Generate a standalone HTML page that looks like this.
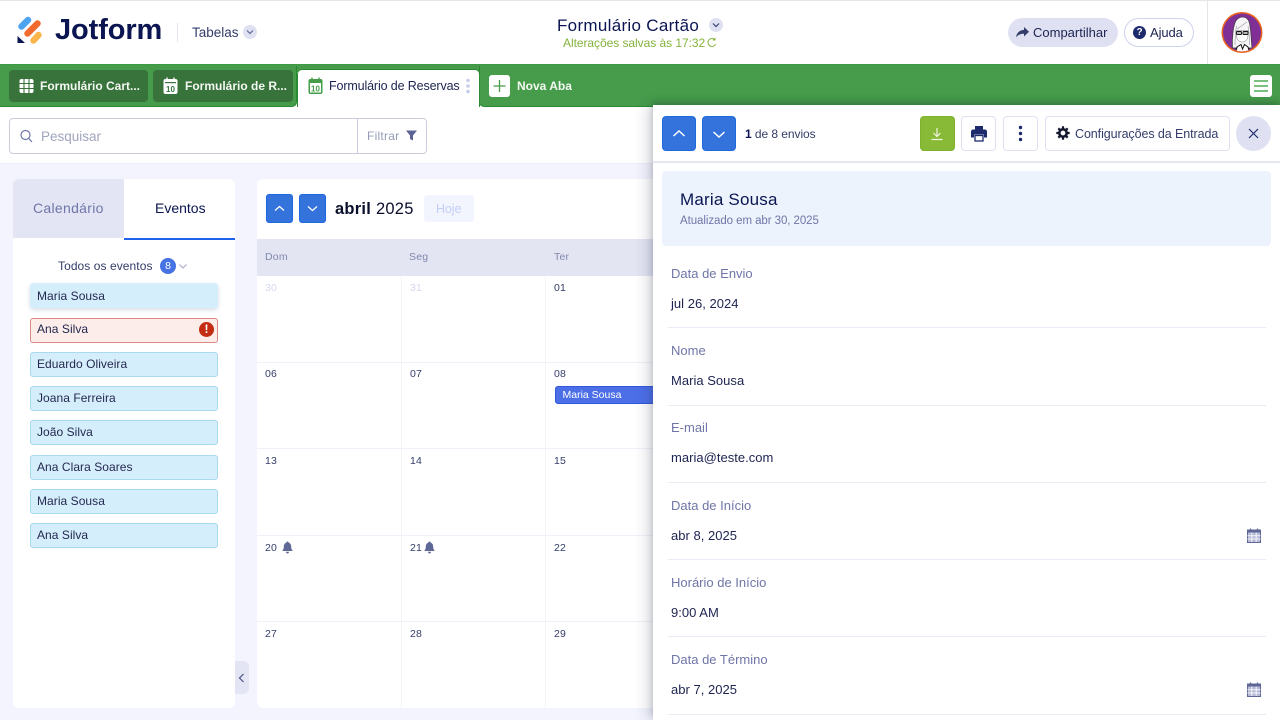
<!DOCTYPE html>
<html lang="pt"><head><meta charset="utf-8"><title>Jotform Tabelas</title>
<style>
*{box-sizing:border-box;margin:0;padding:0}
html,body{width:1280px;height:720px;overflow:hidden;background:#f3f4fd;font-family:"Liberation Sans",sans-serif;color:#0a1551}
.a{position:absolute}
.t{position:absolute;white-space:nowrap;line-height:16px}
svg{display:block}
.ev{position:absolute;left:30px;width:188px;height:25px;border:1px solid #a8d9ef;background:#d5eefb;border-radius:3px;font-size:12px;line-height:23px;padding-left:6px;color:#23284f;letter-spacing:.05px}
.day{position:absolute;font-size:10.5px;line-height:12px;color:#343c6a;letter-spacing:.1px}
.lab{position:absolute;left:671px;font-size:13px;line-height:16px;color:#6f76a7;white-space:nowrap;letter-spacing:0}
.val{position:absolute;left:671px;font-size:13px;line-height:16px;color:#1d2350;white-space:nowrap;letter-spacing:.02px}
.sep{position:absolute;left:668px;width:598px;height:1px;background:#eaebf5}
.btn{position:absolute;top:116px;height:35px;border-radius:4px}
.blue{background:#3473db;border:1px solid #1f69de}
.wh{background:#fff;border:1.5px solid #dfe1f2}
.tabt{font-size:12px;font-weight:700;color:#f4f8f2}
</style></head><body>

<!-- search row -->
<div class="a" style="left:0;top:100px;width:1280px;height:64px;background:#fff;border-bottom:1px solid #eceef8"></div>

<!-- header -->
<div class="a" style="left:0;top:0;width:1280px;height:65px;background:#fff;border-top:1px solid #e6e6e6"></div>
<svg class="a" style="left:16px;top:15px" width="28" height="30" viewBox="0 0 28 30">
<path d="M5.500 11.500L12 5" stroke="#4da3f0" stroke-width="6.500" stroke-linecap="round"/>
<path d="M11.500 18.500L21.500 8.500" stroke="#f26b2e" stroke-width="6.500" stroke-linecap="round"/>
<path d="M17.500 25.500L22.500 20" stroke="#f9b64a" stroke-width="6.500" stroke-linecap="round"/>
<path d="M1.500 21V28H9Z" fill="#0a1551"/></svg>
<div class="t" style="left:55px;top:13px;font-size:29px;line-height:34px;font-weight:700;color:#0a1551;letter-spacing:-.1px">Jotform</div>
<div class="a" style="left:177px;top:23px;width:1px;height:19px;background:#e3e5f3"></div>
<div class="t" style="left:192px;top:25px;font-size:13.5px;color:#343c6a;letter-spacing:0">Tabelas</div>
<div class="a" style="left:243px;top:25px;width:14px;height:14px;border-radius:50%;background:#dfe1f2"></div>
<svg class="a" style="left:246px;top:29px" width="8" height="6" viewBox="0 0 8 6"><path d="M1 1.500L4 4.500L7 1.500" fill="none" stroke="#5a6190" stroke-width="1.100"/></svg>

<div class="t" style="left:557px;top:16px;font-size:17px;line-height:20px;color:#0a1551;letter-spacing:.3px">Formulário Cartão</div>
<div class="a" style="left:709px;top:18px;width:14px;height:14px;border-radius:50%;background:#dfe1f2"></div>
<svg class="a" style="left:712px;top:22px" width="8" height="6" viewBox="0 0 8 6"><path d="M1 1.500L4 4.500L7 1.500" fill="none" stroke="#3a4170" stroke-width="1.200"/></svg>
<div class="t" style="left:563px;top:35px;font-size:12px;color:#84b33c;letter-spacing:-.05px">Alterações salvas às 17:32</div>
<svg class="a" style="left:707px;top:37px" width="10" height="11" viewBox="0 0 10 11"><path d="M8.600 7.200A4 4 0 1 1 7.800 2.600M8 .8V3H5.800" fill="none" stroke="#84b33c" stroke-width="1"/></svg>

<div class="a" style="left:1008px;top:18px;width:110px;height:29px;border-radius:15px;background:#dfe1f2"></div>
<svg class="a" style="left:1015px;top:26px" width="15" height="13" viewBox="0 0 15 13"><path d="M9 1L14 5.800L9 10.500V7.700C5.500 7.700 3 8.600 1 11.500C1.400 7.600 4 4.300 9 3.900Z" fill="#343c6a"/></svg>
<div class="t" style="left:1033px;top:25px;font-size:13px;color:#1d2350;letter-spacing:0">Compartilhar</div>
<div class="a" style="left:1124px;top:18px;width:70px;height:29px;border-radius:15px;background:#fff;border:1px solid #ced2ef"></div>
<div class="a" style="left:1133px;top:26px;width:13px;height:13px;border-radius:50%;background:#1d2a6b;color:#fff;font-size:10px;font-weight:700;line-height:13px;text-align:center">?</div>
<div class="t" style="left:1150px;top:25px;font-size:13px;color:#1d2350;letter-spacing:-.1px">Ajuda</div>
<div class="a" style="left:1207px;top:1px;width:1px;height:64px;background:#e6e6e6"></div>
<svg class="a" style="left:1221px;top:11px" width="42" height="43" viewBox="0 0 42 43">
<defs><clipPath id="c"><circle cx="21" cy="21.500" r="19"/></clipPath></defs>
<circle cx="21" cy="21.500" r="20.500" fill="#e8641f"/><circle cx="21" cy="21.500" r="19" fill="#7f2f96"/>
<g clip-path="url(#c)">
<path d="M11.500 37C11 28 12 13 15.500 9C19 5 25 5 27.500 9.500C30 14 30 28 31 37Z" fill="#f7f4f7" stroke="#3a3a3a" stroke-width=".7"/>
<path d="M16 18C19 16 23 13 26 11M14 34C14 26 14.500 20 15.500 15M28.500 34C28.500 26 28 20 27 15" fill="none" stroke="#999" stroke-width=".6"/>
<path d="M15.500 19.500H27V25C26.500 29 24 31 21.300 31C18.500 31 16 29 15.500 25Z" fill="#fff" stroke="#777" stroke-width=".5"/>
<rect x="15.500" y="20.500" width="5" height="3" rx=".8" fill="#bbb" stroke="#111" stroke-width=".9"/><rect x="22" y="20.500" width="5" height="3" rx=".8" fill="#bbb" stroke="#111" stroke-width=".9"/>
<path d="M14 41.500L17 36L20 34L21.500 38L23.500 34L27 36L29 41.500Z" fill="#fff"/>
<path d="M16 36L20 33.500L21.500 38L23.500 33.500L27 36L29 43H14Z" fill="none" stroke="#111" stroke-width="1"/>
</g></svg>

<!-- tab bar -->
<div class="a" style="left:0;top:64px;width:1280px;height:8px;background:#469c4b;border-top:1px solid #3c9a42"></div>
<div class="a" style="left:0;top:66px;width:297px;height:41px;background:#469c4b;border-bottom:1px solid #2a8a30;border-right:1px solid #2a8a30;border-radius:0 0 5px 0"></div>
<div class="a" style="left:479px;top:66px;width:801px;height:41px;background:#469c4b;border-bottom:1px solid #2a8a30;border-left:1px solid #2a8a30;border-radius:0 0 0 5px"></div>
<div class="a" style="left:9px;top:70px;width:139px;height:32px;background:#38733b;border-radius:4px"></div>
<svg class="a" style="left:19px;top:78px" width="15" height="16" viewBox="0 0 15 16"><rect x=".5" y="1" width="14" height="14" rx="2" fill="#fff"/><path d="M5 1V15M10 1V15M.5 5.500H14.500M.5 10.500H14.500" stroke="#38733b" stroke-width="1.100"/></svg>
<div class="t tabt" style="left:40px;top:78px">Formulário Cart...</div>
<div class="a" style="left:153px;top:70px;width:140px;height:32px;background:#38733b;border-radius:4px"></div>
<svg class="a" style="left:163px;top:77px" width="15" height="18" viewBox="0 0 15 18"><rect x=".5" y="2" width="14" height="15" rx="2" fill="#fff"/><rect x="2" y="5" width="11" height="1.200" fill="#38733b"/><path d="M4 .5V3.500M11 .5V3.500" stroke="#fff" stroke-width="1.400"/><text x="7.500" y="14.800" font-size="8" font-weight="700" text-anchor="middle" fill="#38733b" font-family="Liberation Sans">10</text></svg>
<div class="t tabt" style="left:185px;top:78px">Formulário de R...</div>
<div class="a" style="left:297px;top:69px;width:183px;height:38px;background:#fff;border:1px solid #2a8a30;border-bottom:0;border-radius:5px 5px 0 0"></div>
<svg class="a" style="left:308px;top:77px" width="15" height="18" viewBox="0 0 15 18"><rect x=".5" y="2" width="14" height="15" rx="2" fill="#459c49"/><rect x="2" y="6" width="11" height="9.500" fill="#fff"/><path d="M4 .5V3.500M11 .5V3.500" stroke="#459c49" stroke-width="1.400"/><text x="7.500" y="14.500" font-size="8" font-weight="700" text-anchor="middle" fill="#459c49" font-family="Liberation Sans">10</text></svg>
<div class="t" style="left:329px;top:78px;font-size:12.500px;color:#1d2350;letter-spacing:-.13px">Formulário de Reservas</div>
<svg class="a" style="left:465px;top:78px" width="6" height="16" viewBox="0 0 6 16"><circle cx="3" cy="2.500" r="1.800" fill="#c8cde8"/><circle cx="3" cy="8" r="1.800" fill="#c8cde8"/><circle cx="3" cy="13.500" r="1.800" fill="#c8cde8"/></svg>
<div class="a" style="left:489px;top:75px;width:21px;height:22px;background:#fff;border-radius:3px"></div>
<svg class="a" style="left:493px;top:79px" width="13" height="14" viewBox="0 0 13 14"><path d="M6.500 1V13M.5 7H12.500" stroke="#459c49" stroke-width="1.300"/></svg>
<div class="t tabt" style="left:517px;top:78px">Nova Aba</div>
<div class="a" style="left:1250px;top:75px;width:22px;height:22px;background:#fff;border-radius:3px"></div>
<svg class="a" style="left:1253px;top:79px" width="16" height="14" viewBox="0 0 16 14"><path d="M1 2H15M1 7H15M1 12H15" stroke="#2a9a30" stroke-width="1.300"/></svg>

<!-- search controls -->
<div class="a" style="left:9px;top:118px;width:418px;height:36px;background:#fff;border:1px solid #c9ccdf;border-radius:4px"></div>
<div class="a" style="left:357px;top:118px;width:1px;height:36px;background:#c9ccdf"></div>
<svg class="a" style="left:20px;top:129px" width="13" height="14" viewBox="0 0 13 14"><circle cx="5.500" cy="6" r="4.500" fill="none" stroke="#6f76a7" stroke-width="1.200"/><path d="M8.800 9.500L12 13" stroke="#6f76a7" stroke-width="1.200"/></svg>
<div class="t" style="left:41px;top:128px;font-size:13.500px;line-height:17px;color:#a0a4bc;letter-spacing:0">Pesquisar</div>
<div class="t" style="left:367px;top:128px;font-size:12px;color:#979cb8;letter-spacing:.25px">Filtrar</div>
<svg class="a" style="left:406px;top:130px" width="11" height="11" viewBox="0 0 11 11"><path d="M0 .5H11L7 5.500V10.500L4 9V5.500Z" fill="#5c6496"/></svg>

<!-- sidebar -->
<div class="a" style="left:13px;top:179px;width:222px;height:529px;background:#fff;border-radius:6px;overflow:hidden">
<div class="a" style="left:0;top:0;width:111px;height:59px;background:#e3e5f5"></div>
<div class="a" style="left:111px;top:59px;width:111px;height:1.500px;background:#1f62ee"></div>
</div>
<div class="t" style="left:33px;top:200px;font-size:14px;color:#6f76a7;letter-spacing:.3px">Calendário</div>
<div class="t" style="left:155px;top:200px;font-size:14px;color:#0a1551;letter-spacing:0">Eventos</div>
<div class="t" style="left:58px;top:258px;font-size:12px;color:#343c6a;letter-spacing:.07px">Todos os eventos</div>
<div class="a" style="left:160px;top:258px;width:16px;height:16px;border-radius:50%;background:#4573e3;color:#fff;font-size:10.500px;line-height:16px;text-align:center">8</div>
<svg class="a" style="left:179px;top:264px" width="8" height="5" viewBox="0 0 8 5"><path d="M.5 .5L4 4L7.500 .5" fill="none" stroke="#a5a9c6" stroke-width="1"/></svg>
<div class="ev" style="top:283px;border-color:#d5eefb;line-height:24px;box-shadow:0 2px 5px rgba(80,100,140,.22)">Maria Sousa</div>
<div class="ev" style="top:318px;background:#fcecea;border-color:#d98a82;line-height:21px">Ana Silva</div>
<div class="a" style="left:199px;top:322px;width:15px;height:15px;border-radius:50%;background:#c42b13;color:#fff;font-size:12px;font-weight:700;line-height:15px;text-align:center">!</div>
<div class="ev" style="top:352px">Eduardo Oliveira</div>
<div class="ev" style="top:386px">Joana Ferreira</div>
<div class="ev" style="top:420px">João Silva</div>
<div class="ev" style="top:455px">Ana Clara Soares</div>
<div class="ev" style="top:489px">Maria Sousa</div>
<div class="ev" style="top:523px">Ana Silva</div>
<div class="a" style="left:235px;top:661px;width:14px;height:33px;background:#e3e5f5;border-radius:0 6px 6px 0"></div>
<svg class="a" style="left:238px;top:673px" width="7" height="10" viewBox="0 0 7 10"><path d="M5.500 1L1.500 5L5.500 9" fill="none" stroke="#4a5282" stroke-width="1.200"/></svg>

<!-- calendar -->
<div class="a" style="left:257px;top:179px;width:420px;height:529px;background:#fff;border-radius:6px 0 0 6px"></div>
<div class="a blue" style="left:266px;top:194px;width:27px;height:29px;border-radius:3px"></div>
<svg class="a" style="left:274px;top:205px" width="11" height="7" viewBox="0 0 11 7"><path d="M1 5.500L5.500 1.500L10 5.500" fill="none" stroke="#fff" stroke-width="1.300"/></svg>
<div class="a blue" style="left:299px;top:194px;width:27px;height:29px;border-radius:3px"></div>
<svg class="a" style="left:307px;top:205px" width="11" height="7" viewBox="0 0 11 7"><path d="M1 1.500L5.500 5.500L10 1.500" fill="none" stroke="#fff" stroke-width="1.300"/></svg>
<div class="t" style="left:335px;top:199px;font-size:16.500px;line-height:20px;color:#0a0f2c;letter-spacing:.25px"><b style="font-weight:700">abril</b> 2025</div>
<div class="a" style="left:424px;top:195px;width:50px;height:27px;background:#f3f5fe;border-radius:3px"></div>
<div class="t" style="left:436px;top:201px;font-size:12.500px;color:#c3cdf5;letter-spacing:-.1px">Hoje</div>
<div class="a" style="left:257px;top:239px;width:400px;height:37px;background:#e3e5f3"></div>
<div class="t" style="left:265px;top:249px;font-size:10.500px;color:#8288ae;letter-spacing:.2px">Dom</div>
<div class="t" style="left:409px;top:249px;font-size:10.500px;color:#8288ae;letter-spacing:.2px">Seg</div>
<div class="t" style="left:554px;top:249px;font-size:10.500px;color:#8288ae;letter-spacing:.2px">Ter</div>
<div class="a" style="left:401px;top:276px;width:1px;height:432px;background:#f3f4fa"></div>
<div class="a" style="left:545px;top:276px;width:1px;height:432px;background:#f3f4fa"></div>
<div class="a" style="left:257px;top:362px;width:400px;height:1px;background:#f0f1f8"></div>
<div class="a" style="left:257px;top:448px;width:400px;height:1px;background:#f0f1f8"></div>
<div class="a" style="left:257px;top:535px;width:400px;height:1px;background:#f0f1f8"></div>
<div class="a" style="left:257px;top:621px;width:400px;height:1px;background:#f0f1f8"></div>
<div class="day" style="left:265px;top:282px;color:#d5d8f0">30</div>
<div class="day" style="left:410px;top:282px;color:#d5d8f0">31</div>
<div class="day" style="left:554px;top:282px">01</div>
<div class="day" style="left:265px;top:368px">06</div>
<div class="day" style="left:410px;top:368px">07</div>
<div class="day" style="left:554px;top:368px">08</div>
<div class="day" style="left:265px;top:455px">13</div>
<div class="day" style="left:410px;top:455px">14</div>
<div class="day" style="left:554px;top:455px">15</div>
<div class="day" style="left:265px;top:542px">20</div>
<div class="day" style="left:410px;top:542px">21</div>
<div class="day" style="left:554px;top:542px">22</div>
<div class="day" style="left:265px;top:628px">27</div>
<div class="day" style="left:410px;top:628px">28</div>
<div class="day" style="left:554px;top:628px">29</div>
<svg class="a" style="left:282px;top:541px" width="11" height="13" viewBox="0 0 11 13"><path d="M5.500 .5C6.300 .5 6.600 1 6.600 1.600C8.500 2.200 9.200 3.800 9.200 5.800C9.200 8 10 9 10.800 10H.2C1 9 1.800 8 1.800 5.800C1.800 3.800 2.500 2.200 4.400 1.600C4.400 1 4.700 .5 5.500 .5ZM4 10.800H7C7 12 6.300 12.500 5.500 12.500C4.700 12.500 4 12 4 10.800Z" fill="#5f6796"/></svg>
<svg class="a" style="left:424px;top:541px" width="11" height="13" viewBox="0 0 11 13"><path d="M5.500 .5C6.300 .5 6.600 1 6.600 1.600C8.500 2.200 9.200 3.800 9.200 5.800C9.200 8 10 9 10.800 10H.2C1 9 1.800 8 1.800 5.800C1.800 3.800 2.500 2.200 4.400 1.600C4.400 1 4.700 .5 5.500 .5ZM4 10.800H7C7 12 6.300 12.500 5.500 12.500C4.700 12.500 4 12 4 10.800Z" fill="#5f6796"/></svg>
<div class="a" style="left:554.500px;top:386px;width:110px;height:18px;background:#4c6fe8;border:1px solid #3059d9;border-radius:3px 0 0 3px;color:#fff;font-size:10.500px;line-height:16px;padding-left:7px;letter-spacing:0">Maria Sousa</div>

<!-- panel -->
<div class="a" style="left:653px;top:105px;width:627px;height:615px;background:#fff;box-shadow:-7px 0 12px rgba(40,50,90,.15),0 -3px 6px rgba(20,40,30,.25)"></div>
<div class="a" style="left:653px;top:161px;width:627px;height:1.500px;background:#e4e7f2"></div>
<div class="btn blue" style="left:662px;width:34px"></div>
<svg class="a" style="left:672px;top:129px" width="14" height="9" viewBox="0 0 14 9"><path d="M1.500 7L7 2L12.500 7" fill="none" stroke="#fff" stroke-width="1.500"/></svg>
<div class="btn blue" style="left:702px;width:34px"></div>
<svg class="a" style="left:712px;top:130px" width="14" height="9" viewBox="0 0 14 9"><path d="M1.500 2L7 7L12.500 2" fill="none" stroke="#fff" stroke-width="1.500"/></svg>
<div class="t" style="left:745px;top:126px;font-size:12px;color:#343c6a;letter-spacing:-.06px"><b style="color:#0a1551">1</b> de 8 envios</div>
<div class="btn" style="left:920px;width:35px;background:#88b937;border:1px solid #7fb22a"></div>
<svg class="a" style="left:930px;top:127px" width="14" height="14" viewBox="0 0 14 14"><path d="M7 1V9M3.500 6L7 9.500L10.500 6M1.500 12.500H12.500" fill="none" stroke="#f0f6e0" stroke-width="1.200"/></svg>
<div class="btn wh" style="left:961px;width:35px"></div>
<svg class="a" style="left:971px;top:125px" width="16" height="17" viewBox="0 0 16 17"><path d="M4 1H12V5H4Z" fill="#1d2a6b"/><path d="M2 4.500H14C15 4.500 16 5.500 16 6.500V12.500H13V9.500H3V12.500H0V6.500C0 5.500 1 4.500 2 4.500Z" fill="#1d2a6b"/><rect x="4" y="10.500" width="8" height="5.500" fill="#fff" stroke="#1d2a6b" stroke-width="1.300"/></svg>
<div class="btn wh" style="left:1003px;width:35px"></div>
<svg class="a" style="left:1017px;top:125px" width="7" height="17" viewBox="0 0 7 17"><circle cx="3.500" cy="2.500" r="1.700" fill="#1d2a6b"/><circle cx="3.500" cy="8.500" r="1.700" fill="#1d2a6b"/><circle cx="3.500" cy="14.500" r="1.700" fill="#1d2a6b"/></svg>
<div class="btn wh" style="left:1045px;width:185px"></div>
<svg class="a" style="left:1056px;top:126px" width="14" height="14" viewBox="0 0 14 14"><circle cx="7" cy="7" r="3.700" fill="none" stroke="#14192f" stroke-width="2.600"/><path d="M7 .3V2.500M7 11.500V13.700M.3 7H2.500M11.500 7H13.700M2.300 2.300L3.800 3.800M10.200 10.200L11.700 11.700M2.300 11.700L3.800 10.200M10.200 3.800L11.700 2.300" stroke="#14192f" stroke-width="2.200"/></svg>
<div class="t" style="left:1075px;top:126px;font-size:12.500px;color:#343c6a;letter-spacing:-.085px">Configurações da Entrada</div>
<div class="a" style="left:1236px;top:116px;width:35px;height:35px;border-radius:50%;background:#dfe1f2"></div>
<svg class="a" style="left:1248px;top:128px" width="11" height="11" viewBox="0 0 11 11"><path d="M1 1L10 10M10 1L1 10" stroke="#1d2a6b" stroke-width="1.200"/></svg>

<div class="a" style="left:662px;top:171px;width:609px;height:75px;background:#edf3fd;border-radius:4px"></div>
<div class="t" style="left:680px;top:189px;font-size:17px;line-height:22px;color:#0a1551;letter-spacing:.2px">Maria Sousa</div>
<div class="t" style="left:680px;top:213px;font-size:11.500px;color:#6f76a7;letter-spacing:-.07px">Atualizado em abr 30, 2025</div>

<div class="lab" style="top:266px">Data de Envio</div><div class="val" style="top:296px">jul 26, 2024</div><div class="sep" style="top:327px"></div>
<div class="lab" style="top:343px">Nome</div><div class="val" style="top:373px">Maria Sousa</div><div class="sep" style="top:404.500px"></div>
<div class="lab" style="top:420px">E-mail</div><div class="val" style="top:450px">maria@teste.com</div><div class="sep" style="top:482px"></div>
<div class="lab" style="top:498px">Data de Início</div><div class="val" style="top:528px">abr 8, 2025</div><div class="sep" style="top:559px"></div>
<div class="lab" style="top:575px">Horário de Início</div><div class="val" style="top:605px">9:00 AM</div><div class="sep" style="top:636px"></div>
<div class="lab" style="top:652px">Data de Término</div><div class="val" style="top:682px">abr 7, 2025</div><div class="sep" style="top:714px"></div>
<svg class="a" style="left:1247px;top:528px" width="14" height="15" viewBox="0 0 14 15"><path d="M3.500 .5V3M10.500 .5V3" stroke="#5f6796" stroke-width="1.200"/><rect x=".5" y="2" width="13" height="12.500" fill="#b6bad6" stroke="#5f6796"/><rect x=".5" y="2" width="13" height="2.500" fill="#5f6796"/><path d="M4.800 4.500V14M9.200 4.500V14M.5 7.700H13.500M.5 11H13.500" stroke="#f4f5fb" stroke-width="1"/></svg>
<svg class="a" style="left:1247px;top:682px" width="14" height="15" viewBox="0 0 14 15"><path d="M3.500 .5V3M10.500 .5V3" stroke="#5f6796" stroke-width="1.200"/><rect x=".5" y="2" width="13" height="12.500" fill="#b6bad6" stroke="#5f6796"/><rect x=".5" y="2" width="13" height="2.500" fill="#5f6796"/><path d="M4.800 4.500V14M9.200 4.500V14M.5 7.700H13.500M.5 11H13.500" stroke="#f4f5fb" stroke-width="1"/></svg>
</body></html>
